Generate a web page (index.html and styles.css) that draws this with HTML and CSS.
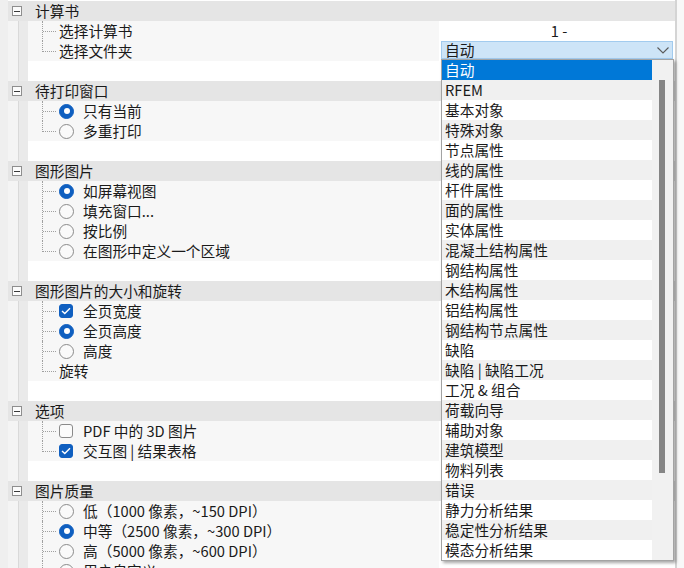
FILE: index.html
```html
<!DOCTYPE html>
<html lang="zh-CN">
<head>
<meta charset="utf-8">
<title>计算书</title>
<link rel="stylesheet" href="styles.css">
</head>
<body>
<div class="page">
  <div class="gutter"></div>
  <div class="tree">
    <div class="row head"><span class="toggle"></span><span class="htext">计算书</span></div>
    <div class="row"><div class="stub"></div><div class="name"><div class="branch"><i class="v"></i><i class="h"></i></div><span class="plain">选择计算书</span></div><div class="value center">1 -</div></div>
    <div class="row"><div class="stub"></div><div class="name"><div class="branch last"><i class="v"></i><i class="h"></i></div><span class="plain">选择文件夹</span></div><div class="value"><div class="combo"><span>自动</span><svg width="12" height="7" viewBox="0 0 12 7"><polyline points="0.5,0.5 6,6 11.5,0.5" fill="none" stroke="#5a5a5a" stroke-width="1.1"/></svg></div></div></div>
    <div class="row blank"><div class="stub"></div><div class="rest"></div></div>

    <div class="row head"><span class="toggle"></span><span class="htext">待打印窗口</span></div>
    <div class="row"><div class="stub"></div><div class="name"><div class="branch"><i class="v"></i><i class="h"></i></div><span class="radio on"></span><span class="lbl">只有当前</span></div><div class="value"></div></div>
    <div class="row"><div class="stub"></div><div class="name"><div class="branch last"><i class="v"></i><i class="h"></i></div><span class="radio"></span><span class="lbl">多重打印</span></div><div class="value"></div></div>
    <div class="row blank"><div class="stub"></div><div class="rest"></div></div>

    <div class="row head"><span class="toggle"></span><span class="htext">图形图片</span></div>
    <div class="row"><div class="stub"></div><div class="name"><div class="branch"><i class="v"></i><i class="h"></i></div><span class="radio on"></span><span class="lbl">如屏幕视图</span></div><div class="value"></div></div>
    <div class="row"><div class="stub"></div><div class="name"><div class="branch"><i class="v"></i><i class="h"></i></div><span class="radio"></span><span class="lbl">填充窗口...</span></div><div class="value"></div></div>
    <div class="row"><div class="stub"></div><div class="name"><div class="branch"><i class="v"></i><i class="h"></i></div><span class="radio"></span><span class="lbl">按比例</span></div><div class="value"></div></div>
    <div class="row"><div class="stub"></div><div class="name"><div class="branch last"><i class="v"></i><i class="h"></i></div><span class="radio"></span><span class="lbl">在图形中定义一个区域</span></div><div class="value"></div></div>
    <div class="row blank"><div class="stub"></div><div class="rest"></div></div>

    <div class="row head"><span class="toggle"></span><span class="htext">图形图片的大小和旋转</span></div>
    <div class="row"><div class="stub"></div><div class="name"><div class="branch"><i class="v"></i><i class="h"></i></div><span class="check on"><svg width="10" height="8" viewBox="0 0 10 8"><polyline points="1,4 3.8,6.6 9,1.2" fill="none" stroke="#fff" stroke-width="1.4"/></svg></span><span class="lbl">全页宽度</span></div><div class="value"></div></div>
    <div class="row"><div class="stub"></div><div class="name"><div class="branch"><i class="v"></i><i class="h"></i></div><span class="radio on"></span><span class="lbl">全页高度</span></div><div class="value"></div></div>
    <div class="row"><div class="stub"></div><div class="name"><div class="branch"><i class="v"></i><i class="h"></i></div><span class="radio"></span><span class="lbl">高度</span></div><div class="value"></div></div>
    <div class="row"><div class="stub"></div><div class="name"><div class="branch last"><i class="v"></i><i class="h"></i></div><span class="plain">旋转</span></div><div class="value"></div></div>
    <div class="row blank"><div class="stub"></div><div class="rest"></div></div>

    <div class="row head"><span class="toggle"></span><span class="htext">选项</span></div>
    <div class="row"><div class="stub"></div><div class="name"><div class="branch"><i class="v"></i><i class="h"></i></div><span class="check"></span><span class="lbl">PDF 中的 3D 图片</span></div><div class="value"></div></div>
    <div class="row"><div class="stub"></div><div class="name"><div class="branch last"><i class="v"></i><i class="h"></i></div><span class="check on"><svg width="10" height="8" viewBox="0 0 10 8"><polyline points="1,4 3.8,6.6 9,1.2" fill="none" stroke="#fff" stroke-width="1.4"/></svg></span><span class="lbl">交互图 | 结果表格</span></div><div class="value"></div></div>
    <div class="row blank"><div class="stub"></div><div class="rest"></div></div>

    <div class="row head"><span class="toggle"></span><span class="htext">图片质量</span></div>
    <div class="row"><div class="stub"></div><div class="name"><div class="branch"><i class="v"></i><i class="h"></i></div><span class="radio"></span><span class="lbl">低（1000 像素，~150 DPI）</span></div><div class="value"></div></div>
    <div class="row"><div class="stub"></div><div class="name"><div class="branch"><i class="v"></i><i class="h"></i></div><span class="radio on"></span><span class="lbl">中等（2500 像素，~300 DPI）</span></div><div class="value"></div></div>
    <div class="row"><div class="stub"></div><div class="name"><div class="branch"><i class="v"></i><i class="h"></i></div><span class="radio"></span><span class="lbl">高（5000 像素，~600 DPI）</span></div><div class="value"></div></div>
    <div class="row"><div class="stub"></div><div class="name"><div class="branch last"><i class="v"></i><i class="h"></i></div><span class="radio"></span><span class="lbl">用户自定义</span></div><div class="value"></div></div>
  </div>
  <div class="rstrip"></div>

  <div class="dropdown">
    <div class="items">
      <div class="item sel">自动</div>
      <div class="item">RFEM</div>
      <div class="item">基本对象</div>
      <div class="item">特殊对象</div>
      <div class="item">节点属性</div>
      <div class="item">线的属性</div>
      <div class="item">杆件属性</div>
      <div class="item">面的属性</div>
      <div class="item">实体属性</div>
      <div class="item">混凝土结构属性</div>
      <div class="item">钢结构属性</div>
      <div class="item">木结构属性</div>
      <div class="item">铝结构属性</div>
      <div class="item">钢结构节点属性</div>
      <div class="item">缺陷</div>
      <div class="item">缺陷 | 缺陷工况</div>
      <div class="item">工况 &amp; 组合</div>
      <div class="item">荷载向导</div>
      <div class="item">辅助对象</div>
      <div class="item">建筑模型</div>
      <div class="item">物料列表</div>
      <div class="item">错误</div>
      <div class="item">静力分析结果</div>
      <div class="item">稳定性分析结果</div>
      <div class="item">模态分析结果</div>
    </div>
    <div class="track"><div class="thumb"></div></div>
  </div>
</div>
</body>
</html>
```

FILE: styles.css
```css
* { box-sizing: border-box; }

body {
  margin: 0;
  width: 684px;
  height: 568px;
  overflow: hidden;
  background: #fff;
  font-family: "Noto Sans CJK SC", "Noto Sans", sans-serif;
  font-size: 14.7px;
  color: #1a1a1a;
}

.page {
  position: relative;
  display: flex;
  height: 568px;
}

.gutter {
  flex: none;
  width: 8px;
  background: #efefef;
}

.tree {
  flex: none;
  width: 667px;
  padding-top: 1px;
}

.rstrip {
  flex: 1;
  border-left: 2px solid #d4d4d4;
  background: #f8f8f8;
}

.row {
  display: flex;
  height: 20px;
  line-height: 20px;
  white-space: nowrap;
}

.head {
  background: #e5e5e5;
  align-items: center;
}

.toggle {
  flex: none;
  width: 10px;
  height: 10px;
  margin-left: 4px;
  border: 1px solid #8e8e8e;
  background: #fbfbfb;
  display: flex;
  align-items: center;
  justify-content: center;
}

.toggle::after {
  content: "";
  width: 6px;
  height: 1px;
  background: #3a3a3a;
}

.htext {
  margin-left: 13px;
}

.stub {
  flex: none;
  width: 20px;
  background: linear-gradient(to right, #f4f4f4 0 10px, #d9d9d9 10px 11px, #eaeaea 11px 20px);
}

.name {
  flex: none;
  width: 411px;
  background: #f7f7f7;
  display: flex;
  align-items: center;
}

.value {
  flex: 1;
  background: #fff;
  display: flex;
  align-items: flex-start;
}

.value.center {
  justify-content: center;
  padding-left: 4px;
}

.rest {
  flex: 1;
  background: #fff;
}

.branch {
  flex: none;
  width: 28px;
  height: 20px;
  display: flex;
  align-items: flex-start;
  align-self: flex-start;
}

.branch .v {
  width: 15px;
  height: 20px;
  border-right: 1px dotted #a0a0a0;
}

.branch.last .v {
  height: 11px;
}

.branch .h {
  width: 13px;
  height: 11px;
  border-bottom: 1px dotted #a0a0a0;
}

.plain {
  margin-left: 3px;
}

.radio {
  flex: none;
  width: 15px;
  height: 15px;
  margin-left: 3px;
  border-radius: 50%;
  border: 1px solid #8a8a8a;
  background: #fafafa;
}

.radio.on {
  background: #0f5fc0;
  border-color: #0f5fc0;
  display: flex;
  align-items: center;
  justify-content: center;
}

.radio.on::after {
  content: "";
  width: 6px;
  height: 6px;
  border-radius: 50%;
  background: #fff;
}

.check {
  flex: none;
  width: 14px;
  height: 14px;
  margin-left: 3px;
  margin-right: 1px;
  border-radius: 3px;
  border: 1px solid #8a8a8a;
  background: #fbfbfb;
  display: flex;
  align-items: center;
  justify-content: center;
}

.check.on {
  background: #0f5fc0;
  border-color: #0f5fc0;
}

.lbl {
  margin-left: 9px;
}

.combo {
  margin-left: 2px;
  width: 232px;
  height: 18px;
  line-height: 16px;
  background: #cde4f7;
  border: 1px solid #a2cbee;
  display: flex;
  align-items: center;
  justify-content: space-between;
  padding: 0 3px 0 3px;
}

.dropdown {
  position: absolute;
  left: 441px;
  top: 59px;
  width: 233px;
  height: 502px;
  border: 1px solid #a3a3a3;
  background: #fff;
  box-shadow: 2px 2px 3px rgba(0, 0, 0, 0.35);
  display: flex;
}

.items {
  flex: none;
  width: 210px;
}

.item {
  height: 20px;
  line-height: 20px;
  padding-left: 3px;
  white-space: nowrap;
  background: #fff;
}

.item:nth-child(even) {
  background: #f0f0f0;
}

.item.sel {
  background: #0078d7;
  color: #fff;
}

.track {
  flex: 1;
  background: #f1f1f1;
  padding-top: 20px;
  padding-left: 7px;
}

.thumb {
  width: 6px;
  height: 393px;
  background: #858585;
}
```
